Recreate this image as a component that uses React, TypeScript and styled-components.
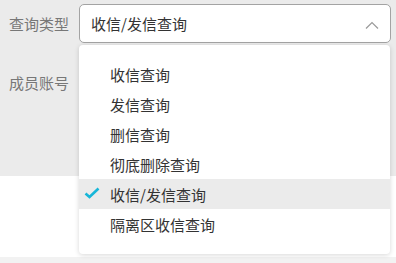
import React from "react";
import styled, { createGlobalStyle } from "styled-components";

const GlobalStyle = createGlobalStyle`
  html, body {
    margin: 0;
    padding: 0;
    background: #ffffff;
    font-family: "Noto Sans CJK SC", "Noto Sans", sans-serif;
  }
`;

const options = [
	"收信查询",
	"发信查询",
	"删信查询",
	"彻底删除查询",
	"收信/发信查询",
	"隔离区收信查询",
];

export default function App() {
	const selected = "收信/发信查询";

	return (
		<Page>
			<GlobalStyle />
			<FormPanel>
				<FieldRow>
					<Label>查询类型</Label>
					<SelectWrap>
						<SelectBox>
							<SelectValue>{selected}</SelectValue>
							<Caret viewBox="0 0 14 8" aria-hidden>
								<path d="M1 7.5 L7 1.5 L13 7.5" />
							</Caret>
						</SelectBox>
						<Menu>
							{options.map((opt) => (
								<Option key={opt} $active={opt === selected}>
									{opt === selected && (
										<Check viewBox="0 0 16 12" aria-hidden>
											<path d="M1.5 6.5 L5.5 10 L14.5 1.5" />
										</Check>
									)}
									{opt}
								</Option>
							))}
						</Menu>
					</SelectWrap>
				</FieldRow>
				<FieldRow $second>
					<Label>成员账号</Label>
					<Input />
				</FieldRow>
			</FormPanel>
			<WhiteArea />
			<BottomStrip />
		</Page>
	);
}

const Page = styled.div`
  width: 396px;
  height: 263px;
  overflow: hidden;
  display: flex;
  flex-direction: column;
`;

const FormPanel = styled.div`
  background: #ebebeb;
  height: 176px;
  padding-top: 4px;
  box-sizing: border-box;
  flex-shrink: 0;
`;

const FieldRow = styled.div<{ $second?: boolean }>`
  display: flex;
  align-items: center;
  height: 39px;
  margin-top: ${(p) => (p.$second ? "20px" : "0")};
`;

const Label = styled.div`
  width: 79px;
  padding-left: 9px;
  box-sizing: border-box;
  font-size: 15px;
  color: #777777;
  white-space: nowrap;
`;

const SelectWrap = styled.div`
  position: relative;
  width: 312px;
  height: 39px;
  z-index: 2;
`;

const SelectBox = styled.div`
  height: 100%;
  box-sizing: border-box;
  border: 1px solid #a3a3a3;
  border-radius: 5px;
  background: #ffffff;
  display: flex;
  align-items: center;
  justify-content: space-between;
  padding: 0 11px 0 11px;
`;

const SelectValue = styled.span`
  font-size: 15px;
  color: #333333;
`;

const Caret = styled.svg`
  width: 14px;
  height: 8px;
  margin-top: 2px;
  fill: none;
  stroke: #9a9a9a;
  stroke-width: 1.2;
`;

const Menu = styled.div`
  position: absolute;
  top: 41px;
  left: 0;
  width: 311px;
  height: 209px;
  box-sizing: border-box;
  padding-top: 14px;
  background: #ffffff;
  border-radius: 4px;
  box-shadow: 0 1px 5px rgba(0, 0, 0, 0.16);
`;

const Option = styled.div<{ $active?: boolean }>`
  position: relative;
  height: 30px;
  display: flex;
  align-items: center;
  padding-left: 31px;
  font-size: 15px;
  color: #333333;
  background: ${(p) => (p.$active ? "#ebebeb" : "transparent")};
`;

const Check = styled.svg`
  position: absolute;
  left: 5px;
  top: 8px;
  width: 16px;
  height: 12px;
  fill: none;
  stroke: #17b6d8;
  stroke-width: 2.6;
`;

const Input = styled.div`
  width: 308px;
  height: 39px;
  box-sizing: border-box;
  border: 1px solid #c8c8c8;
  border-radius: 5px;
  background: #ffffff;
`;

const WhiteArea = styled.div`
  height: 81px;
  background: #ffffff;
  flex-shrink: 0;
`;

const BottomStrip = styled.div`
  flex: 1;
  background: #f2f2f2;
`;
